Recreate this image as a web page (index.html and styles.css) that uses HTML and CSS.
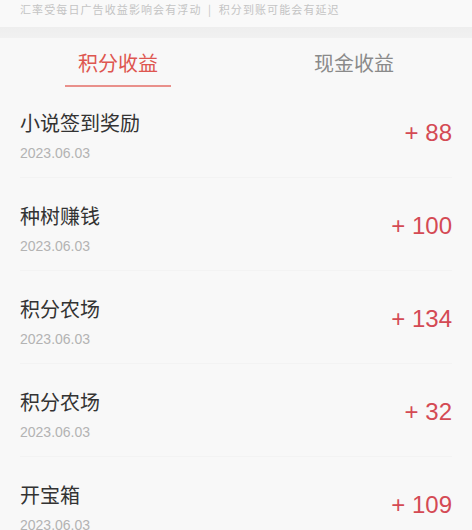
FILE: index.html
```html
<!DOCTYPE html>
<html lang="zh">
<head>
<meta charset="utf-8">
<link rel="stylesheet" href="styles.css">
</head>
<body>
<div class="notice">汇率受每日广告收益影响会有浮动 <span class="sep">|</span> 积分到账可能会有延迟</div>
<div class="band"></div>
<div class="tabs">
  <div class="tab active"><span class="tab-label">积分收益</span></div>
  <div class="tab"><span class="tab-label">现金收益</span></div>
</div>
<div class="list">
  <div class="row">
    <div class="row-inner">
      <div class="info">
        <div class="title">小说签到奖励</div>
        <div class="date">2023.06.03</div>
      </div>
      <div class="value">+ 88</div>
    </div>
  </div>
  <div class="row">
    <div class="row-inner">
      <div class="info">
        <div class="title">种树赚钱</div>
        <div class="date">2023.06.03</div>
      </div>
      <div class="value">+ 100</div>
    </div>
  </div>
  <div class="row">
    <div class="row-inner">
      <div class="info">
        <div class="title">积分农场</div>
        <div class="date">2023.06.03</div>
      </div>
      <div class="value">+ 134</div>
    </div>
  </div>
  <div class="row">
    <div class="row-inner">
      <div class="info">
        <div class="title">积分农场</div>
        <div class="date">2023.06.03</div>
      </div>
      <div class="value">+ 32</div>
    </div>
  </div>
  <div class="row">
    <div class="row-inner">
      <div class="info">
        <div class="title">开宝箱</div>
        <div class="date">2023.06.03</div>
      </div>
      <div class="value">+ 109</div>
    </div>
  </div>
</div>
</body>
</html>
```

FILE: styles.css
```css
html, body {
  margin: 0;
  padding: 0;
  background: #f8f8f8;
  font-family: "Noto Sans CJK SC", "Liberation Sans", sans-serif;
  overflow: hidden;
}

.notice {
  height: 27px;
  box-sizing: border-box;
  padding: 2px 20px 0;
  font-size: 11px;
  line-height: 15px;
  letter-spacing: 1.1px;
  color: #c4c4c4;
  background: #f9f9f9;
  white-space: nowrap;
}

.notice .sep {
  margin: 0 3px;
}

.band {
  height: 11px;
  background: linear-gradient(#eeeeee, #f1f1f1);
}

.tabs {
  display: flex;
  height: 57px;
  background: #f8f8f8;
}

.tab {
  flex: 1;
  display: flex;
  justify-content: center;
  align-items: flex-start;
  padding-top: 12px;
}

.tab-label {
  font-size: 20px;
  line-height: 26px;
  color: #8a8a8a;
  padding: 0 13px 9px;
  border-bottom: 2px solid transparent;
}

.tab.active .tab-label {
  color: #de5650;
  border-bottom-color: #e9908b;
}

.row {
  padding: 0 20px;
  margin-bottom: 10px;
}

.row-inner {
  display: flex;
  justify-content: space-between;
  align-items: flex-start;
  padding: 14px 0 15px;
  border-bottom: 1px solid #f3f3f3;
}

.title {
  font-size: 20px;
  line-height: 28px;
  color: #333333;
}

.date {
  margin-top: 7px;
  font-family: "Liberation Sans", sans-serif;
  font-size: 14px;
  line-height: 18px;
  color: #b3b3b3;
}

.value {
  margin-top: 10px;
  font-family: "Liberation Sans", sans-serif;
  font-size: 24px;
  line-height: 28px;
  color: #d44a54;
}
```
